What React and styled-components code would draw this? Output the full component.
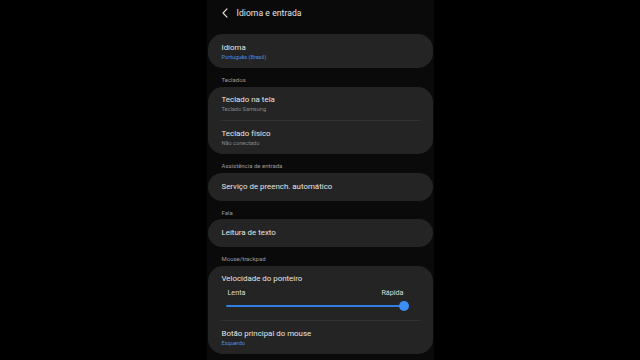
import React from "react";
import styled, { createGlobalStyle } from "styled-components";

const Global = createGlobalStyle`
  html, body { margin: 0; padding: 0; background: #000; }
  body { font-family: Roboto, "Noto Sans", "Liberation Sans", sans-serif; }
  * { box-sizing: border-box; }
`;

const Stage = styled.div`
  width: 640px;
  height: 360px;
  display: flex;
  justify-content: center;
  background: #000;
  overflow: hidden;
`;

const Screen = styled.div`
  width: 227px;
  height: 360px;
  background: #0a0a0a;
  display: flex;
  flex-direction: column;
  padding: 0 1px 0 1px;
`;

const Header = styled.div`
  height: 26px;
  display: flex;
  align-items: center;
  padding-left: 14px;
  gap: 9px;
  margin-bottom: 8px;
`;

const Title = styled.div`
  color: #e6e6e6;
  font-size: 8.6px;
  letter-spacing: 0.05px;
`;

const Card = styled.div`
  background: #242424;
  border-radius: 15px;
  display: flex;
  flex-direction: column;
`;

const Row = styled.div`
  padding: ${(p) => (p.$single ? "9px 14px 9px" : "8px 14px 7px")};
  display: flex;
  flex-direction: column;
`;

const RowTitle = styled.div`
  color: #e4e4e4;
  font-size: 7.9px;
  line-height: 10px;
  white-space: nowrap;
`;

const RowSub = styled.div`
  color: ${(p) => (p.$accent ? "#4d8ee0" : "#878787")};
  font-size: 5.6px;
  line-height: 8px;
  white-space: nowrap;
`;

const Divider = styled.div`
  height: 1px;
  background: #323232;
  margin: 0 12px 0 13px;
`;

const SectionLabel = styled.div`
  color: #9a9a9a;
  font-size: 6px;
  line-height: 8px;
  padding: ${(p) => p.$pad || "8px 14px 3px"};
`;

const SliderBlock = styled.div`
  padding: 8px 14px 8px;
  display: flex;
  flex-direction: column;
`;

const SliderLabels = styled.div`
  display: flex;
  justify-content: space-between;
  margin-top: 4px;
  padding: 0 15px 0 6px;
  color: #dedede;
  font-size: 7.2px;
  line-height: 9px;
`;

const Track = styled.div`
  position: relative;
  height: 12px;
  margin: 3px 15px 0 4px;
  display: flex;
  align-items: center;
`;

const TrackLine = styled.div`
  flex: 1;
  height: 2px;
  border-radius: 1px;
  background: #2f7fe3;
`;

const Thumb = styled.div`
  position: absolute;
  right: -5px;
  top: 1px;
  width: 10px;
  height: 10px;
  border-radius: 50%;
  background: #3a8ef6;
`;

const Back = () => (
  <svg width="6" height="10" viewBox="0 0 6 10">
    <polyline points="5,0.8 1,5 5,9.2" fill="none" stroke="#e6e6e6" strokeWidth="1.1" strokeLinecap="round" strokeLinejoin="round" />
  </svg>
);

export default function App() {
  return (
    <>
      <Global />
      <Stage>
        <Screen>
          <Header>
            <Back />
            <Title>Idioma e entrada</Title>
          </Header>
          <Card>
            <Row style={{ paddingTop: 9 }}>
              <RowTitle>Idioma</RowTitle>
              <RowSub $accent>Português (Brasil)</RowSub>
            </Row>
          </Card>
          <SectionLabel>Teclados</SectionLabel>
          <Card>
            <Row>
              <RowTitle>Teclado na tela</RowTitle>
              <RowSub>Teclado Samsung</RowSub>
            </Row>
            <Divider />
            <Row>
              <RowTitle>Teclado físico</RowTitle>
              <RowSub>Não conectado</RowSub>
            </Row>
          </Card>
          <SectionLabel>Assistência de entrada</SectionLabel>
          <Card>
            <Row $single>
              <RowTitle>Serviço de preench. automático</RowTitle>
            </Row>
          </Card>
          <SectionLabel $pad="8px 14px 2px">Fala</SectionLabel>
          <Card>
            <Row $single>
              <RowTitle>Leitura de texto</RowTitle>
            </Row>
          </Card>
          <SectionLabel>Mouse/trackpad</SectionLabel>
          <Card>
            <SliderBlock>
              <RowTitle>Velocidade do ponteiro</RowTitle>
              <SliderLabels>
                <span>Lenta</span>
                <span>Rápida</span>
              </SliderLabels>
              <Track>
                <TrackLine />
                <Thumb />
              </Track>
            </SliderBlock>
            <Divider />
            <Row>
              <RowTitle>Botão principal do mouse</RowTitle>
              <RowSub $accent>Esquerdo</RowSub>
            </Row>
          </Card>
        </Screen>
      </Stage>
    </>
  );
}
